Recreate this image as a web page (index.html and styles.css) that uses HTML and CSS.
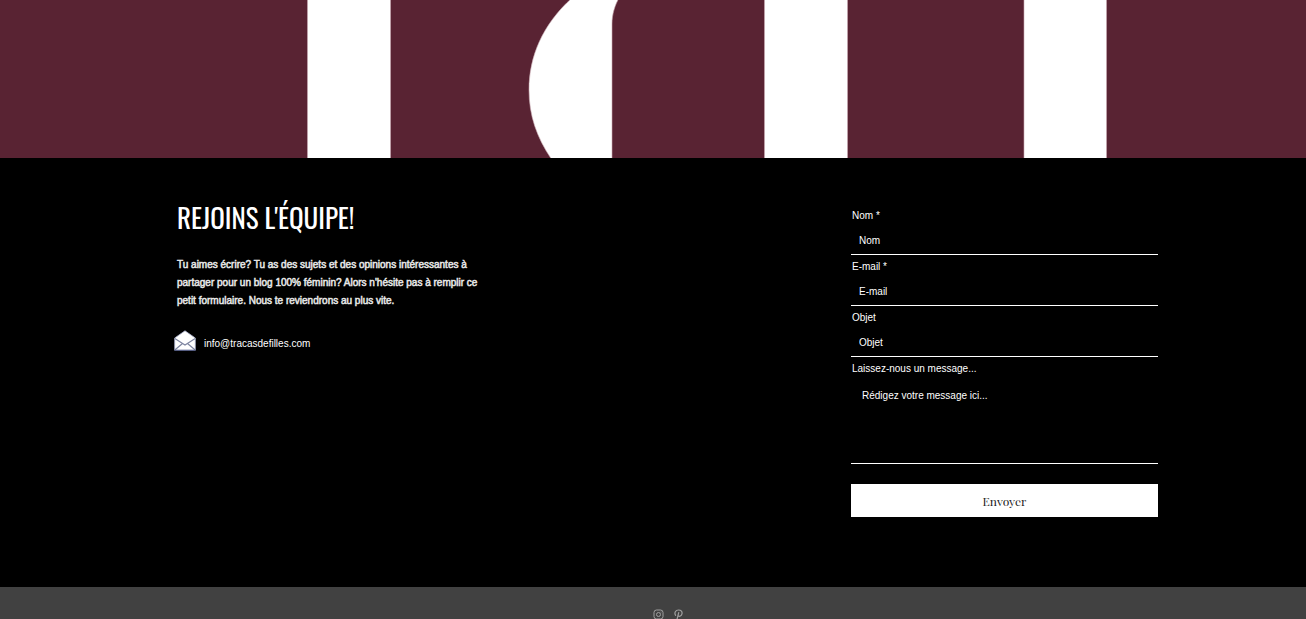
FILE: index.html
```html
<!DOCTYPE html>
<html lang="fr">
<head>
<meta charset="utf-8">
<meta name="viewport" content="width=device-width, initial-scale=1">
<title>Rejoins l'équipe!</title>
<link rel="stylesheet" href="styles.css">
</head>
<body>
<header class="banner">
  <svg class="banner-art" viewBox="0 0 1306 158" preserveAspectRatio="xMidYMid slice" aria-hidden="true">
    <g fill="#fff" stroke="#c9a9b2" stroke-width=".6">
      <path d="M307.5-2H390.5V160H307.5Z"/>
      <path d="M572-2C543 24 529 56 529 90C529 116 537 138 552 160H612V24C612 14 615 5 619-2Z"/>
      <path d="M764.5-2H847.5V160H764.5Z"/>
      <path d="M1024-2H1106.500V160H1024Z"/>
    </g>
  </svg>
</header>
<main class="contact">
  <section class="intro">
    <h1 class="title">REJOINS L'ÉQUIPE!</h1>
    <p class="text">Tu aimes écrire? Tu as des sujets et des opinions intéressantes à partager pour un blog 100% féminin? Alors n'hésite pas à remplir ce petit formulaire. Nous te reviendrons au plus vite.</p>
    <div class="mail">
      <svg class="mail-icon" width="22" height="21" viewBox="0 0 22 21" aria-hidden="true">
        <path d="M.7 8L11 .8L21.300 8V20.200H.7Z" fill="#fff" stroke="#a9b0cc" stroke-width=".8"/>
        <path d="M.8 8.500L11 15L21.200 8.500M.8 20L8.500 13.500M21.200 20L13.500 13.500" fill="none" stroke="#7d84a0" stroke-width="1.200"/>
        <path d="M.5 20.300H21.500" stroke="#4d5680"/>
      </svg>
      <a class="mail-link" href="mailto:info@tracasdefilles.com">info@tracasdefilles.com</a>
    </div>
  </section>
  <form class="form">
    <div class="field">
      <label class="label" for="nom">Nom *</label>
      <input class="input" id="nom" type="text" placeholder="Nom" required>
    </div>
    <div class="field">
      <label class="label" for="email">E-mail *</label>
      <input class="input" id="email" type="email" placeholder="E-mail" required>
    </div>
    <div class="field">
      <label class="label" for="objet">Objet</label>
      <input class="input" id="objet" type="text" placeholder="Objet">
    </div>
    <div class="field">
      <label class="label" for="message">Laissez-nous un message...</label>
      <textarea class="input message" id="message" placeholder="Rédigez votre message ici..."></textarea>
    </div>
    <button class="submit" type="submit">Envoyer</button>
  </form>
</main>
<footer class="footer">
  <a class="social" href="#" aria-label="Instagram">
    <svg width="11" height="11" viewBox="0 0 11 11" fill="none" stroke="#a0a0a0" aria-hidden="true">
      <rect x="1" y="1" width="9" height="9" rx="2.500"/>
      <circle cx="5.500" cy="5.500" r="2"/>
      <circle cx="8" cy="3" r=".5" fill="#a0a0a0" stroke="none"/>
    </svg>
  </a>
  <a class="social" href="#" aria-label="Pinterest">
    <svg width="11" height="11" viewBox="0 0 11 11" fill="none" stroke="#a0a0a0" stroke-width="1.200" stroke-linecap="round" aria-hidden="true">
      <path d="M2.600 6.300C1 4 2.500 1 5.600 1C8.200 1 9.400 2.700 9 4.700C8.600 7 6.400 8 5 6.700M5.700 3.600L4 10.500"/>
    </svg>
  </a>
</footer>
</body>
</html>
```
FILE: styles.css
```css
* {
  box-sizing: border-box;
}

body {
  margin: 0;
  min-height: 100vh;
  display: flex;
  flex-direction: column;
  background: #414141;
  color: #fff;
  font-family: "Liberation Sans", Arial, sans-serif;
  font-size: 10px;
  line-height: 14px;
  overflow-x: hidden;
}

.banner {
  height: 158px;
  background: #592333;
}

.banner-art {
  display: block;
  width: 100%;
  height: 100%;
}

.contact {
  display: flex;
  justify-content: space-between;
  align-items: flex-start;
  gap: 40px;
  padding: 40px 148px 70px 177px;
  background: #000;
}

.intro {
  flex: 0 1 312px;
}

.title {
  margin: 0 0 20px;
  font-family: Oswald, "Liberation Sans Narrow", "Liberation Sans", sans-serif;
  font-size: 27px;
  font-weight: 400;
  line-height: 38px;
}

.text {
  margin: 0 0 20px;
  color: #e8e8e8;
  line-height: 18px;
  -webkit-text-stroke: 0.5px #e8e8e8;
}

.mail {
  display: flex;
  align-items: center;
  gap: 8px;
  margin-left: -3px;
}

.mail-link {
  padding-top: 6px;
  color: #fff;
  text-decoration: none;
}

.form {
  flex: 0 1 307px;
  display: flex;
  flex-direction: column;
  gap: 5px;
  padding-top: 11px;
}

.field {
  display: flex;
  flex-direction: column;
}

.label {
  padding-left: 1px;
}

.input {
  width: 100%;
  height: 32px;
  margin: 0;
  padding: 4px 8px 0;
  border: 0;
  border-bottom: 1px solid #fff;
  border-radius: 0;
  outline: 0;
  background: transparent;
  color: #fff;
  font: inherit;
}

.input::placeholder {
  color: #fff;
  opacity: 1;
}

.message {
  height: 88px;
  padding: 13px 11px;
  resize: none;
}

.submit {
  height: 33px;
  margin-top: 15px;
  padding: 0;
  border: 0;
  background: #fff;
  color: #222;
  font-family: "Playfair Display", "Liberation Serif", serif;
  font-size: 12px;
  cursor: pointer;
}

.footer {
  display: flex;
  justify-content: center;
  gap: 9px;
  height: 32px;
  padding: 22px 0 0 31px;
  overflow: hidden;
}

.social {
  display: flex;
}
```
